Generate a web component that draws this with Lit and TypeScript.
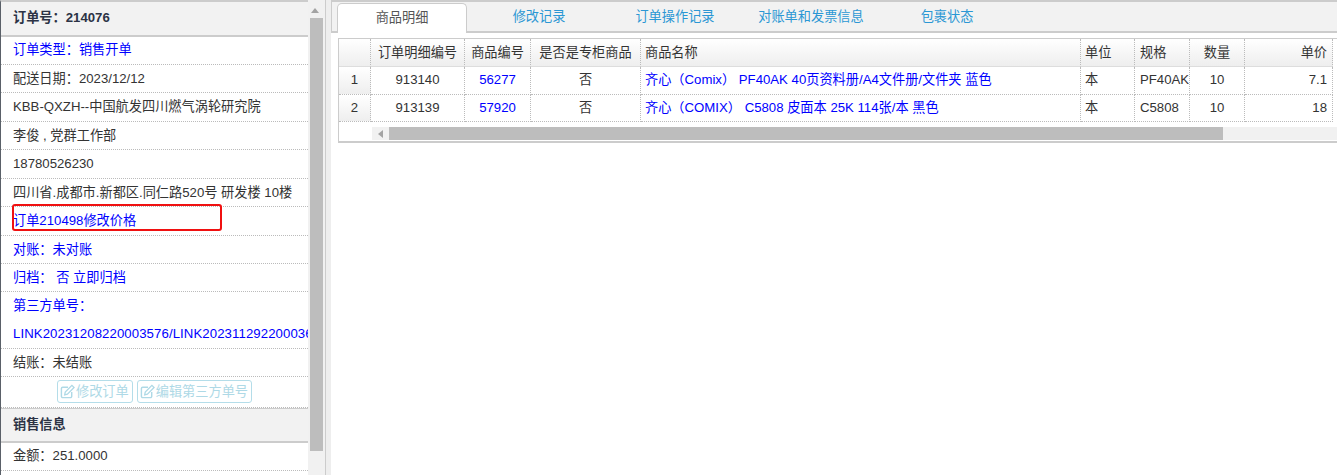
import { LitElement, html, css, svg } from "lit";
import { customElement } from "lit/decorators.js";

const pencil = html`<svg class="pen" viewBox="0 0 16 16" fill="none" stroke="currentColor" stroke-width="1.5">
  <path d="M12.5 8.5v4.6a1.4 1.4 0 0 1-1.4 1.4H2.9a1.4 1.4 0 0 1-1.4-1.4V4.9a1.4 1.4 0 0 1 1.4-1.4h5.6" />
  ${svg`<path d="M5 11.5l.6-2.9L12.7 1.5l2.3 2.3-7.1 7.1z" stroke-width="1.4"/>`}
</svg>`;

const rows = [
  { id: "913140", code: "56277", name: "齐心（Comix） PF40AK 40页资料册/A4文件册/文件夹 蓝色", spec: "PF40AK", price: "7.1" },
  { id: "913139", code: "57920", name: "齐心（COMIX） C5808 皮面本 25K 114张/本 黑色", spec: "C5808", price: "18" },
];

@customElement("app-root")
export class AppRoot extends LitElement {
  static styles = css`
    :host { display: flex; width: 1337px; height: 475px; overflow: hidden; background: #fff; color: #333;
      font: 13.2px/20px "Liberation Sans", "Noto Sans CJK SC", sans-serif; }
    a { color: inherit; text-decoration: none; }
    .left { width: 308px; flex: none; overflow: hidden; border-top: 2px solid #ccc; border-left: 1px solid #5a6068; box-sizing: border-box; height: 475px; }
    .head { height: 34.5px; box-sizing: border-box; padding: 6px 12px; background: #f2f2f2; font-weight: 700; color: #2c3345; border-bottom: 2px solid #ccc; line-height: 20px; }
    .row { height: 28.45px; box-sizing: border-box; padding: 3px 12px; border-bottom: 1px dotted #bbb; white-space: nowrap; line-height: 21px; }
    .first { padding-top: 2px; }
    .tall { height: 56.5px; }
    .tall div { height: 28px; }
    .link { letter-spacing: 0.09px; }
    .settle { height: 28.3px; }
    .amount { height: 28px; }
    .blue { color: #0000ff; }
    .btns { height: 31px; padding: 3px 0 0; display: flex; justify-content: center; gap: 4px; box-sizing: border-box; border-bottom: 1px dotted #bbb; }
    .btn { height: 23px; box-sizing: border-box; border: 1px solid #b4dde9; border-radius: 3px; color: #aed9e6; display: flex; align-items: center; padding: 0 3px 0 2px; gap: 1px; line-height: 20px; }
    .pen { width: 15px; height: 15px; }
    .sect { height: 34.3px; box-sizing: border-box; padding: 6px 12px; background: #f2f2f2; font-weight: 700; color: #2c3345; border-top: 1px solid #ccc; border-bottom: 2px solid #ccc; }
    .vbar { width: 17px; flex: none; background: #f1f1f1; display: flex; flex-direction: column; align-items: center; height: 475px; box-sizing: border-box; padding-top: 8px; }
    .up { width: 0; height: 0; border: 4px solid transparent; border-top: 0; border-bottom: 5px solid #a3a3a3; margin-left: -3px; }
    .thumb { width: 13px; height: 433px; margin-top: 5px; background: #bdbdbd; }
    .gutter { width: 6px; flex: none; box-sizing: border-box; background: #eee; border-left: 1px solid #ccc; }
    .right { flex: 1; min-width: 0; overflow: hidden; }
    .tabs { height: 33px; box-sizing: border-box; background: #f2f2f2; border-top: 2px solid #ccc; border-bottom: 2px solid #ccc; border-left: 1px solid #ccc; padding: 1px 0 0 5px; display: flex; }
    .tab { width: 136px; flex: none; height: 31px; box-sizing: border-box; text-align: center; color: #2b97d4; line-height: 27px; }
    .tab.on { width: 130px; margin-right: 4px; background: #fff; color: #555; border: 1px solid #ccc; border-bottom: 0; border-radius: 5px 5px 0 0; height: 30px; }
    .grid { margin: 5px 0 0 7px; border: 1px solid #ccc; border-right: 0; border-bottom: 2px solid #ccc; overflow: hidden; height: 105px; box-sizing: border-box; }
    table { border-collapse: separate; border-spacing: 0; table-layout: fixed; width: 994px; }
    th, td { box-sizing: border-box; font-weight: 400; padding: 0 5px; border-right: 1px dotted #bbb; border-bottom: 1px dotted #bbb; white-space: nowrap; overflow: hidden; text-align: center; }
    th { height: 28px; background: linear-gradient(#fff, #eee); border-bottom: 1px solid #ddd; line-height: 24px; }
    td { height: 27.5px; line-height: 24px; }
    td.num { background: linear-gradient(#fff, #eee); }
    .l { text-align: left; }
    .l4 { text-align: left; padding-left: 4px; }
    .r { text-align: right; }
    .sp { padding-right: 0; }
    .hbar { display: flex; height: 20px; margin-left: 33px; padding-top: 5px; box-sizing: border-box; }
    .hbar i { display: flex; width: 17px; height: 13px; background: #f1f1f1; align-items: center; justify-content: center; }
    .hbar i::before { content: ""; border: 4px solid transparent; border-left: 0; border-right: 5px solid #a3a3a3; }
    .hbar b { display: block; width: 834px; height: 13px; background: #bdbdbd; }
    .hbar u { flex: 1; height: 13px; background: #f1f1f1; }
    .mark { position: absolute; left: 12px; top: 204px; width: 210px; height: 27px; box-sizing: border-box; border: 2px solid #f01010; border-radius: 3px; }
  `;

  render() {
    return html`
      <div class="left">
        <div class="head">订单号：214076</div>
        <div class="row first blue"><a href="#">订单类型：销售开单</a></div>
        <div class="row">配送日期：2023/12/12</div>
        <div class="row">KBB-QXZH--中国航发四川燃气涡轮研究院</div>
        <div class="row">李俊 , 党群工作部</div>
        <div class="row">18780526230</div>
        <div class="row">四川省.成都市.新都区.同仁路520号 研发楼 10楼</div>
        <div class="row blue">订单210498修改价格</div>
        <div class="row blue">对账：未对账</div>
        <div class="row blue">归档： 否 立即归档</div>
        <div class="row tall blue"><div>第三方单号：</div><div class="link">LINK20231208220003576/LINK20231129220003664</div></div>
        <div class="row settle">结账：未结账</div>
        <div class="btns">
          <span class="btn">${pencil}修改订单</span>
          <span class="btn">${pencil}编辑第三方单号</span>
        </div>
        <div class="sect">销售信息</div>
        <div class="row first amount">金额：251.0000</div>
      </div>
      <div class="vbar"><span class="up"></span><span class="thumb"></span></div>
      <div class="gutter"></div>
      <div class="right">
        <div class="tabs">
          <div class="tab on">商品明细</div>
          <div class="tab">修改记录</div>
          <div class="tab">订单操作记录</div>
          <div class="tab">对账单和发票信息</div>
          <div class="tab">包裹状态</div>
        </div>
        <div class="grid">
          <table>
            <colgroup>
              ${[32, 94, 66, 110, 440, 54, 55, 55, 88].map((w) => html`<col style="width:${w}px" />`)}
            </colgroup>
            <thead>
              <tr>
                <th></th><th>订单明细编号</th><th>商品编号</th><th>是否是专柜商品</th><th class="l4">商品名称</th>
                <th class="l4">单位</th><th class="l">规格</th><th>数量</th><th class="r">单价</th>
              </tr>
            </thead>
            <tbody>
              ${rows.map((r, i) => html`
                <tr>
                  <td class="num">${i + 1}</td><td>${r.id}</td><td class="blue">${r.code}</td><td>否</td>
                  <td class="l4 blue">${r.name}</td><td class="l4">本</td><td class="l sp">${r.spec}</td><td>10</td><td class="r">${r.price}</td>
                </tr>`)}
            </tbody>
          </table>
          <div class="hbar"><i></i><b></b><u></u></div>
        </div>
      </div>
      <div class="mark"></div>
    `;
  }
}
